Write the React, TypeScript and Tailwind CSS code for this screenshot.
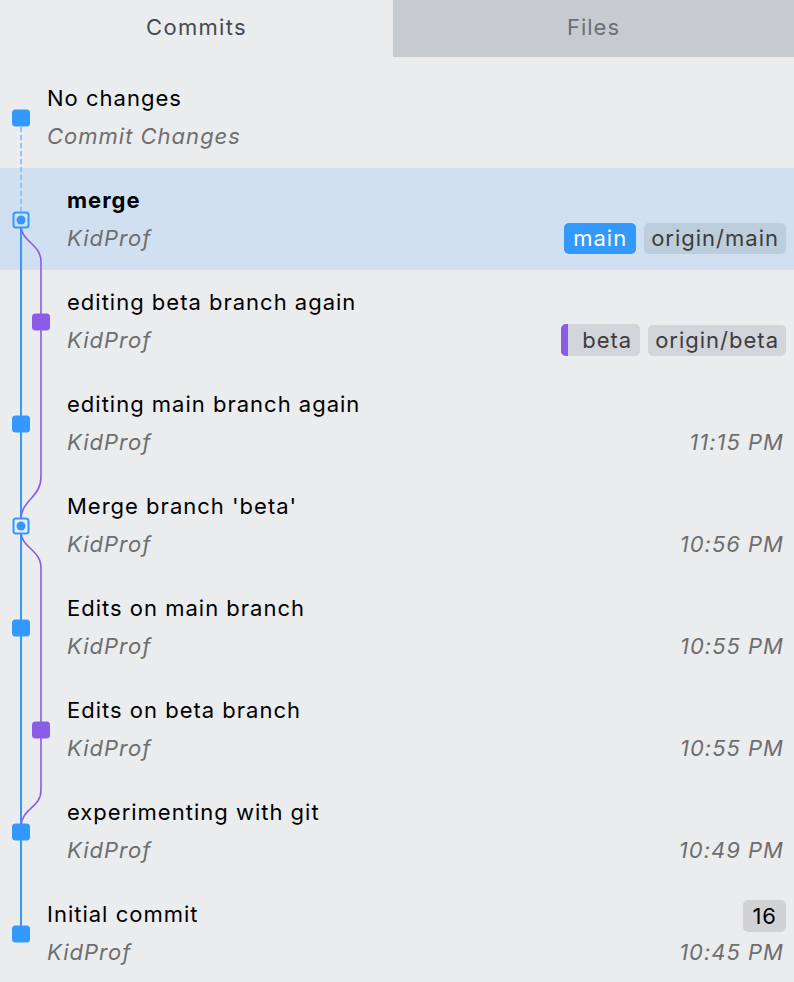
import React from "react";

type Tag = { label: string; kind: "blue" | "gray" | "purple" };

type Commit = {
  title: string;
  sub: string;
  indent: boolean;
  bold?: boolean;
  selected?: boolean;
  time?: string;
  tags?: Tag[];
  badge?: string;
};

const commits: Commit[] = [
  { title: "No changes", sub: "Commit Changes", indent: false },
  {
    title: "merge",
    sub: "KidProf",
    indent: true,
    bold: true,
    selected: true,
    tags: [
      { label: "main", kind: "blue" },
      { label: "origin/main", kind: "gray" },
    ],
  },
  {
    title: "editing beta branch again",
    sub: "KidProf",
    indent: true,
    tags: [
      { label: "beta", kind: "purple" },
      { label: "origin/beta", kind: "gray" },
    ],
  },
  { title: "editing main branch again", sub: "KidProf", indent: true, time: "11:15 PM" },
  { title: "Merge branch 'beta'", sub: "KidProf", indent: true, time: "10:56 PM" },
  { title: "Edits on main branch", sub: "KidProf", indent: true, time: "10:55 PM" },
  { title: "Edits on beta branch", sub: "KidProf", indent: true, time: "10:55 PM" },
  { title: "experimenting with git", sub: "KidProf", indent: true, time: "10:49 PM" },
  { title: "Initial commit", sub: "KidProf", indent: false, time: "10:45 PM", badge: "16" },
];

const BLUE = "#3399ff";
const PURPLE = "#8b5ce6";

// graph coordinates are relative to the list (page y - 57)
const y = (py: number) => py - 57;

const Node = ({ cx, cy, color }: { cx: number; cy: number; color: string }) => (
  <rect x={cx - 9} y={cy - 8.5} width={18} height={17} rx={3.5} fill={color} />
);

const MergeNode = ({ cx, cy, fill }: { cx: number; cy: number; fill: string }) => (
  <g>
    <rect x={cx - 7.5} y={cy - 7.5} width={15} height={15} rx={2.5} fill={fill} stroke={BLUE} strokeWidth={2} />
    <circle cx={cx} cy={cy} r={4.5} fill={BLUE} />
  </g>
);

const Graph = () => (
  <svg className="absolute top-0 left-0 pointer-events-none" width={60} height={925}>
    <line x1={21} y1={y(127)} x2={21} y2={y(211)} stroke="#8cc2f7" strokeWidth={2} strokeDasharray="5 3" />
    <line x1={21} y1={y(228)} x2={21} y2={y(934)} stroke={BLUE} strokeWidth={2} />
    <path
      d={`M21 ${y(227)} C22 ${y(242)} 41 ${y(244)} 41 ${y(262)} L41 ${y(477)} C41 ${y(497)} 22 ${y(500)} 21 ${y(518)}`}
      fill="none"
      stroke={PURPLE}
      strokeWidth={1.6}
    />
    <path
      d={`M21 ${y(533)} C22 ${y(548)} 41 ${y(550)} 41 ${y(568)} L41 ${y(790)} C41 ${y(808)} 22 ${y(808)} 21 ${y(826)}`}
      fill="none"
      stroke={PURPLE}
      strokeWidth={1.6}
    />
    <Node cx={21} cy={y(118)} color={BLUE} />
    <MergeNode cx={21} cy={y(220)} fill="#d0e0f0" />
    <Node cx={41} cy={y(322)} color={PURPLE} />
    <Node cx={21} cy={y(424)} color={BLUE} />
    <MergeNode cx={21} cy={y(526)} fill="#ebecee" />
    <Node cx={21} cy={y(628)} color={BLUE} />
    <Node cx={41} cy={y(730)} color={PURPLE} />
    <Node cx={21} cy={y(832)} color={BLUE} />
    <Node cx={21} cy={y(934)} color={BLUE} />
  </svg>
);

const TagPill = ({ tag, onSelected }: { tag: Tag; onSelected?: boolean }) => {
  if (tag.kind === "blue") {
    return (
      <span className="h-[31px] px-[9px] flex items-center rounded-[5px] bg-[#3399ff] text-white">{tag.label}</span>
    );
  }
  if (tag.kind === "purple") {
    return (
      <span className="h-[32px] flex items-center rounded-[5px] bg-[#d2d5da] text-[#3c3c3c] overflow-hidden">
        <span className="w-[7px] h-full bg-[#8b5ce6]" />
        <span className="pl-[14px] pr-[8px]">{tag.label}</span>
      </span>
    );
  }
  return (
    <span
      className={`h-[31px] px-[7px] flex items-center rounded-[5px] text-[#3c3c3c] ${
        onSelected ? "bg-[#bccddc]" : "bg-[#d2d5da]"
      }`}
    >
      {tag.label}
    </span>
  );
};

const Row = ({ c }: { c: Commit }) => (
  <div
    className={`h-[102px] pt-[13px] pr-[9px] flex flex-col ${c.indent ? "pl-[67px]" : "pl-[47px]"} ${
      c.selected ? "bg-[#d0e0f0]" : ""
    }`}
  >
    <div className="h-[38px] flex items-center justify-between">
      <span className={`text-black ${c.bold ? "font-bold" : ""}`}>{c.title}</span>
      {c.badge && (
        <span className="h-[32px] px-[9px] flex items-center rounded-[5px] bg-[#d2d2d4] text-black mt-[4px] mr-[-1px]">
          {c.badge}
        </span>
      )}
    </div>
    <div className="h-[38px] flex items-center justify-between">
      <span className="italic text-[#6e6e6e]">{c.sub}</span>
      {c.tags && (
        <div className="flex items-center gap-[8px] mr-[-1px]">
          {c.tags.map((t) => (
            <TagPill key={t.label} tag={t} onSelected={c.selected} />
          ))}
        </div>
      )}
      {c.time && <span className="italic text-[#6e6e6e] mr-[1px]">{c.time}</span>}
    </div>
  </div>
);

export default function App() {
  return (
    <div
      className="w-[794px] h-[982px] overflow-hidden bg-[#ebecee] text-[22px] leading-none tracking-[1px]"
      style={{ fontFamily: "Inter, 'Noto Sans', sans-serif" }}
    >
      <div className="flex h-[57px]">
        <div className="w-[393px] pb-[3px] flex items-center justify-center text-[#454b53] tracking-[1.3px]">Commits</div>
        <div className="flex-1 pb-[3px] flex items-center justify-center bg-[#c6cbd0] text-[#6a7079]">Files</div>
      </div>
      <div className="relative pt-[9px]">
        {commits.map((c) => (
          <Row key={c.title} c={c} />
        ))}
        <Graph />
      </div>
    </div>
  );
}
